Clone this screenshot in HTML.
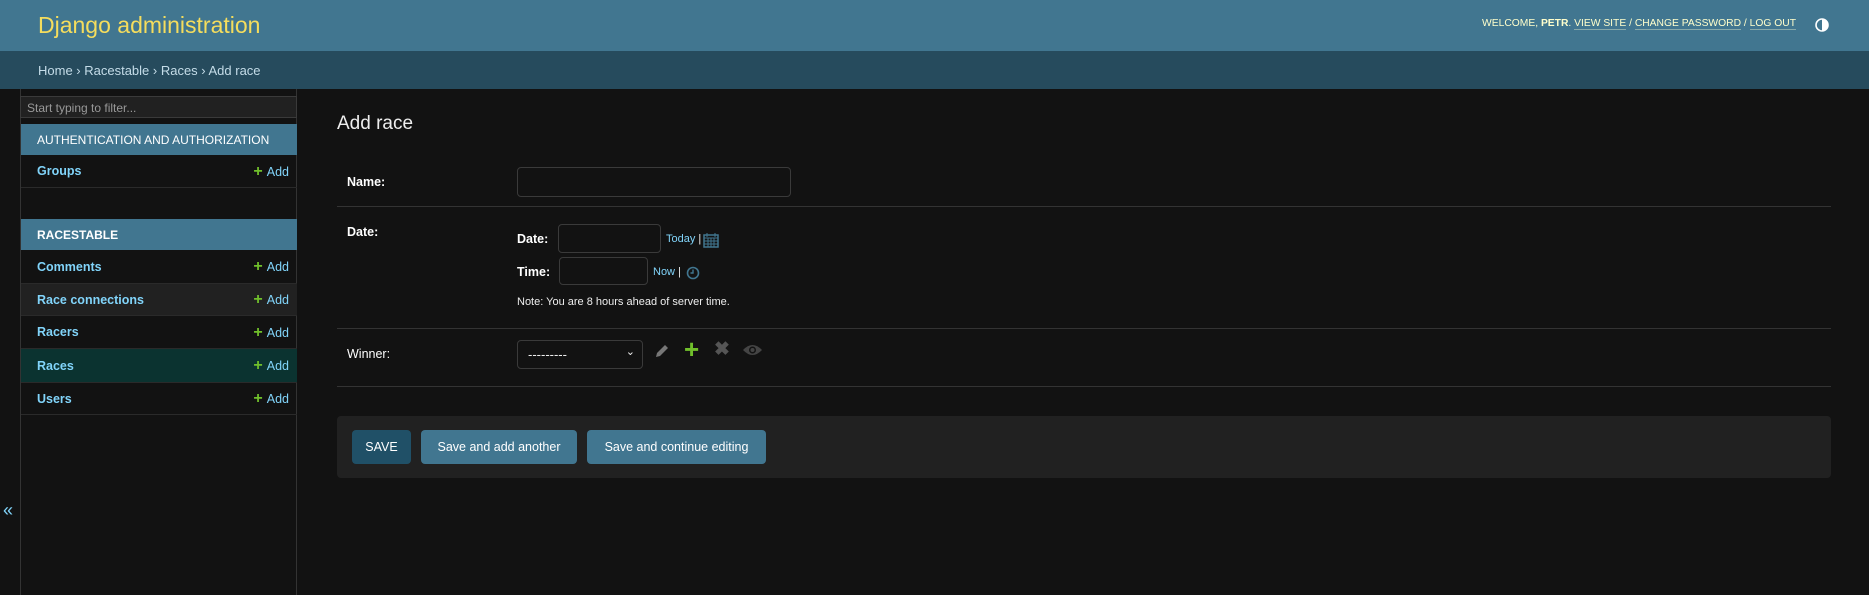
<!DOCTYPE html>
<html><head><meta charset="utf-8"><style>
*{box-sizing:border-box;margin:0;padding:0}
body{width:1869px;height:595px;background:#121212;color:#eee;font-family:"Liberation Sans",sans-serif;font-size:13px;position:relative;overflow:hidden}
.a{position:absolute}
#hdr{left:0;top:0;width:1869px;height:51px;background:#417690}
#bc{left:0;top:51px;width:1869px;height:38px;background:#264b5d;color:#c4dce8;font-size:13px;padding:12px 0 0 38px}
a,.lk{color:#81d4fa;text-decoration:none}
.side{left:20px;top:89px;width:277px;height:506px;border-left:1px solid #333;border-right:1px solid #333}
.cap{position:absolute;left:0;width:276px;height:31px;background:#417690;color:#fff;font-size:12px;padding:9px 0 0 16px}
.row{position:absolute;left:0;width:276px;border-bottom:1px solid #2a2a2a;font-size:12.5px;font-weight:bold;padding:0 0 0 16px;color:#81d4fa}
.row .ad{position:absolute;right:8px;font-weight:normal}
.ad b{color:#70bf2b;font-size:16px;margin-right:4px}
.lbl{font-weight:bold;color:#fff;font-size:12.5px}
.inp{border:1px solid #3a3a3a;border-radius:4px;background:#121212}
.hr{left:337px;width:1494px;height:1px;background:#333}
.btn{position:absolute;top:14px;height:34px;border-radius:4px;background:#417690;color:#fff;font-size:12.5px;text-align:center;line-height:34px}
</style></head><body>
<div id="hdr" class="a">
 <div class="a" style="left:38px;top:12px;font-size:23px;color:#f5dd5d">Django administration</div>
 <div class="a" style="left:1482px;top:18px;font-size:10.3px;color:#ffc">WELCOME, <b>PETR</b>. <span style="border-bottom:1px solid #8aa">VIEW SITE</span> / <span style="border-bottom:1px solid #8aa">CHANGE PASSWORD</span> / <span style="border-bottom:1px solid #8aa">LOG OUT</span></div>
 <svg class="a" style="left:1815px;top:18px" width="14" height="14" viewBox="0 0 14 14"><circle cx="7" cy="7" r="6" fill="none" stroke="#fff" stroke-width="1.6"/><path d="M7 1a6 6 0 0 1 0 12z" fill="#fff"/></svg>
</div>
<div id="bc" class="a">Home › Racestable › Races › Add race</div>
<div class="a" style="left:0;top:89px;width:21px;height:506px;border-right:1px solid #333"></div>
<div class="a" style="left:3px;top:500px;color:#81d4fa;font-size:18px">«</div>
<div class="a side">
 <div class="a inp" style="left:-1px;top:7px;width:277px;height:22px;background:#212121;border-radius:0;color:#999;font-size:12px;padding:4px 6px">Start typing to filter...</div>
 <div class="cap" style="top:35px">AUTHENTICATION AND AUTHORIZATION</div>
 <div class="row" style="top:66px;height:33px;line-height:33px">Groups<span class="ad"><b>+</b>Add</span></div>
 <div class="cap" style="top:130px;font-weight:bold">RACESTABLE</div>
 <div class="row" style="top:161px;height:34px;line-height:34px">Comments<span class="ad"><b>+</b>Add</span></div>
 <div class="row" style="top:195px;height:32px;line-height:32px;background:#212121">Race connections<span class="ad"><b>+</b>Add</span></div>
 <div class="row" style="top:227px;height:33px;line-height:33px">Racers<span class="ad"><b>+</b>Add</span></div>
 <div class="row" style="top:260px;height:34px;line-height:34px;background:#0b3330">Races<span class="ad"><b>+</b>Add</span></div>
 <div class="row" style="top:294px;height:32px;line-height:32px">Users<span class="ad"><b>+</b>Add</span></div>
</div>
<div class="a" style="left:337px;top:113px;font-size:19px;color:#eee;font-weight:300">Add race</div>
<div class="a lbl" style="left:347px;top:175px">Name:</div>
<div class="a inp" style="left:517px;top:167px;width:274px;height:30px"></div>
<div class="a hr" style="top:206px"></div>
<div class="a lbl" style="left:347px;top:225px">Date:</div>
<div class="a lbl" style="left:517px;top:232px">Date:</div>
<div class="a inp" style="left:558px;top:224px;width:103px;height:29px"></div>
<div class="a lk" style="left:666px;top:233px;font-size:11px">Today <span style="color:#eee">|</span></div>
<svg class="a" style="left:703px;top:232px" width="16" height="16" viewBox="0 0 16 16"><rect x="1" y="3" width="14" height="12" fill="none" stroke="#417690" stroke-width="1.5"/><path d="M1 6h14M4 1v4M12 1v4M1 9h14M1 12h14M5 6v9M8 6v9M11 6v9" stroke="#417690"/></svg>
<div class="a lbl" style="left:517px;top:265px">Time:</div>
<div class="a inp" style="left:559px;top:257px;width:89px;height:28px"></div>
<div class="a lk" style="left:653px;top:266px;font-size:11px">Now <span style="color:#eee">|</span></div>
<svg class="a" style="left:686px;top:266px" width="14" height="14" viewBox="0 0 14 14"><circle cx="7" cy="7" r="5.5" fill="none" stroke="#417690" stroke-width="1.6"/><path d="M7 3.5V7H4.5" fill="none" stroke="#417690" stroke-width="1.4"/></svg>
<div class="a" style="left:517px;top:296px;font-size:11px;color:#eee">Note: You are 8 hours ahead of server time.</div>
<div class="a hr" style="top:328px"></div>
<div class="a" style="left:347px;top:347px;font-size:12.5px;color:#fff">Winner:</div>
<div class="a inp" style="left:517px;top:340px;width:126px;height:29px;font-size:13px;padding:6px 10px;color:#eee">---------<span style="position:absolute;right:7px;top:4px;font-size:11px">&#8964;</span></div>
<svg class="a" style="left:653px;top:342px" width="18" height="18" viewBox="0 0 18 18"><path d="M3 15l1-4 8-8 3 3-8 8z" fill="#777"/></svg>
<div class="a" style="left:684px;top:334px;font-size:26px;font-weight:bold;color:#70bf2b">+</div>
<div class="a" style="left:714px;top:338px;font-size:19px;font-weight:bold;color:#555">✖</div>
<svg class="a" style="left:742px;top:342px" width="21" height="16" viewBox="0 0 21 16"><path d="M1 8q9.5-10 19 0q-9.5 10-19 0z" fill="#444"/><circle cx="10.5" cy="8" r="3.5" fill="#121212"/><circle cx="10.5" cy="8" r="2" fill="#444"/></svg>
<div class="a hr" style="top:386px"></div>
<div class="a" style="left:337px;top:416px;width:1494px;height:62px;background:#212121;border-radius:4px">
 <div class="btn" style="left:15px;width:59px;background:#205067">SAVE</div>
 <div class="btn" style="left:84px;width:156px">Save and add another</div>
 <div class="btn" style="left:250px;width:179px">Save and continue editing</div>
</div>
</body></html>
